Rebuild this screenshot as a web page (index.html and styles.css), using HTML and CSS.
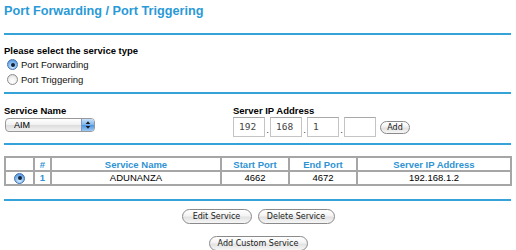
FILE: index.html
```html
<!DOCTYPE html>
<html>
<head>
<meta charset="utf-8">
<link rel="stylesheet" href="styles.css">
</head>
<body>
<div class="page">
  <h1 class="title">Port Forwarding / Port Triggering</h1>
  <div class="rule"></div>
  <section class="type">
    <div class="label">Please select the service type</div>
    <div class="radio-row"><span class="radio on"></span><span>Port Forwarding</span></div>
    <div class="radio-row"><span class="radio"></span><span>Port Triggering</span></div>
  </section>
  <div class="rule"></div>
  <section class="service">
    <div class="name-col">
      <div class="label">Service Name</div>
      <div class="select"><span class="sel-text">AIM</span><span class="arrows"><svg width="13" height="12" viewBox="0 0 13 12"><path d="M4 5 L6.5 2 L9 5 Z M4 7 L6.5 10 L9 7 Z" fill="#1a1a1a"/></svg></span></div>
    </div>
    <div class="ip-col">
      <div class="label">Server IP Address</div>
      <div class="ip-row">
        <span class="ip">192</span><span class="dot">.</span>
        <span class="ip">168</span><span class="dot">.</span>
        <span class="ip">1</span><span class="dot">.</span>
        <span class="ip"></span>
        <span class="btn add">Add</span>
      </div>
    </div>
  </section>
  <div class="rule"></div>
  <table class="table">
    <tr class="head">
      <th class="c1"></th>
      <th class="c2">#</th>
      <th class="c3">Service Name</th>
      <th class="c4">Start Port</th>
      <th class="c5">End Port</th>
      <th class="c6">Server IP Address</th>
    </tr>
    <tr class="data">
      <td><span class="radio on small"></span></td>
      <td class="num">1</td>
      <td>ADUNANZA</td>
      <td>4662</td>
      <td>4672</td>
      <td>192.168.1.2</td>
    </tr>
  </table>
  <div class="rule"></div>
</div>
<div class="buttons">
  <div class="btn-row">
    <span class="btn edit">Edit Service</span>
    <span class="btn del">Delete Service</span>
  </div>
  <span class="btn custom">Add Custom Service</span>
</div>
</body>
</html>
```
FILE: styles.css
```css
* { box-sizing: border-box; }
html, body { margin: 0; padding: 0; background: #fff; }
body {
  width: 516px;
  height: 250px;
  overflow: hidden;
  font-family: "Liberation Sans", Arial, sans-serif;
  font-size: 9.5px;
  color: #000;
}
.page { padding: 0 5px 0 4px; }
.title {
  margin: 0;
  height: 33px;
  padding-top: 4px;
  font-size: 12.7px;
  line-height: 15px;
  font-weight: bold;
  color: #2a9ad6;
}
.rule { width: 507px; height: 2px; background: #35a3d8; }
.label { font-weight: bold; line-height: 12px; height: 12px; }

.type { padding: 10px 0 5px; }
.radio-row {
  display: flex;
  align-items: center;
  height: 15px;
  padding-left: 3px;
  gap: 3px;
  color: #111;
}
.radio {
  width: 11px;
  height: 11px;
  border-radius: 50%;
  border: 1px solid #8c8c8c;
  background: radial-gradient(circle at 50% 70%, #fff 0%, #f2f2f2 50%, #d0d0d0 100%);
  display: inline-flex;
  align-items: center;
  justify-content: center;
  flex: none;
}
.radio.on {
  border-color: #4673b5;
  background: radial-gradient(circle at 50% 75%, #d6ecff 0%, #8cc0ef 45%, #3f86d6 100%);
}
.radio.on::after {
  content: "";
  width: 4px;
  height: 4px;
  border-radius: 50%;
  background: #10223d;
}
.radio.small { width: 11px; height: 11px; }

.service {
  display: flex;
  padding: 11px 0 6px;
}
.name-col { width: 229px; }
.select {
  margin-top: 1px;
  margin-left: 1px;
  width: 90px;
  height: 14px;
  border: 1px solid #999;
  border-radius: 4px;
  background: linear-gradient(#ffffff, #f0f0f0 50%, #dcdcdc 51%, #f2f2f2);
  display: flex;
  align-items: center;
  overflow: hidden;
}
.sel-text { flex: 1; padding-left: 8px; font-size: 9px; }
.arrows {
  width: 13px;
  height: 12px;
  background: linear-gradient(#c9e2fb, #7fb4ec 50%, #4d93e2 51%, #9ccaf5);
  border-left: 1px solid #7d9bc4;
  display: flex;
}
.ip-row {
  display: flex;
  align-items: center;
  height: 20px;
}
.ip {
  width: 32px;
  height: 20px;
  border: 1px solid #c4c4c4;
  border-top-color: #a8a8a8;
  background: #fff;
  font-family: "DejaVu Sans Mono", monospace;
  font-size: 9.5px;
  color: #444;
  line-height: 18px;
  padding-left: 5px;
}
.dot {
  width: 5px;
  text-align: center;
  align-self: flex-end;
  line-height: 14px;
  color: #333;
}
.btn {
  display: inline-flex;
  align-items: center;
  justify-content: center;
  height: 15px;
  border: 1px solid #8a8a8a;
  border-radius: 8px;
  background: linear-gradient(#ffffff, #f3f3f3 45%, #e2e2e2 55%, #f6f6f6);
  font-family: "DejaVu Sans", sans-serif;
  font-size: 8px;
  color: #1a1a1a;
}
.btn.add { width: 30px; height: 13px; margin-left: 4px; font-size: 8px; }

.table {
  margin: 11px 0 13px;
  width: 506px;
  border-collapse: collapse;
  table-layout: fixed;
  border: 2px solid #a6a6a6;
}
.table th, .table td {
  border: 2px solid #a6a6a6;
  padding: 0;
  text-align: center;
  font-size: 9.5px;
}
.table th {
  color: #2f93d3;
  font-weight: bold;
  height: 14px;
}
.table td { height: 12px; }
.table td.num { color: #2f93d3; font-weight: bold; }
.table td .radio { vertical-align: middle; }
.c1 { width: 29px; }
.c2 { width: 17px; }
.c3 { width: 170px; }
.c4 { width: 68px; }
.c5 { width: 68px; }
.c6 { width: 154px; }

.buttons {
  display: flex;
  flex-direction: column;
  align-items: center;
  gap: 12px;
  margin-top: 8px;
  width: 516px;
}
.btn-row { display: flex; gap: 6px; }
.btn.edit { width: 70px; }
.btn.del { width: 77px; }
.btn.custom { width: 99px; }
```
